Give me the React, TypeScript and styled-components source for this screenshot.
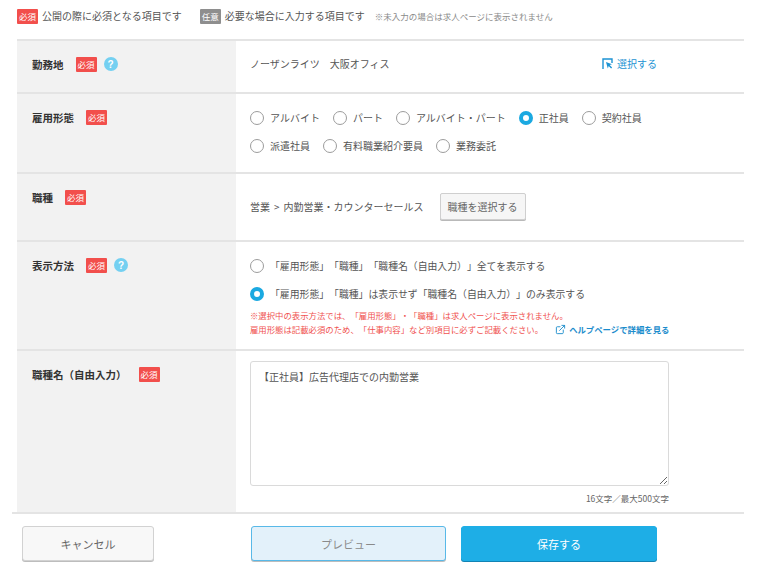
import React from 'react'
import styled, { createGlobalStyle } from 'styled-components'
import { ExternalLink } from 'lucide-react'

const GlobalStyle = createGlobalStyle`
    body {
        margin: 0;
        background: #fff;
        font-family: 'Noto Sans CJK JP', 'Noto Sans', sans-serif;
        color: #555;
        text-spacing-trim: space-all;
    }
`

const Page = styled.div`
    width: 760px;
    height: 570px;
    overflow: hidden;
    padding-top: 9px;
    box-sizing: border-box;
`

const Legend = styled.div`
    display: flex;
    align-items: center;
    height: 14px;
    margin: 0 0 16px 17px;
    font-size: 10px;
    line-height: 14px;
`

const LegendText = styled.span<{ $gapAfter?: number }>`
    margin-left: 4px;
    margin-right: ${p => p.$gapAfter ?? 0}px;
    white-space: nowrap;
`

const LegendNote = styled.span`
    font-size: 8.5px;
    color: #8a8a8a;
    white-space: nowrap;
`

const Badge = styled.span<{ $kind?: 'required' | 'optional' }>`
    display: inline-flex;
    align-items: center;
    justify-content: center;
    width: 21px;
    height: 15px;
    flex: none;
    border-radius: 1px;
    background: ${p => (p.$kind === 'optional' ? '#8e8e8e' : '#f24f4c')};
    color: #fff;
    font-size: 8.5px;
    font-weight: 400;
    line-height: 1;
`

const Table = styled.div`
    margin-left: 17px;
    width: 727px;
`

const Row = styled.div`
    display: grid;
    grid-template-columns: 219px 1fr;
    border-top: 2px solid #e4e4e4;
`

const LabelCell = styled.div`
    background: #f2f2f2;
    padding: 14px 15px;
`

const LabelInner = styled.div`
    display: flex;
    align-items: center;
    height: 18px;
    font-size: 10.5px;
    font-weight: 700;
    color: #333;
    white-space: nowrap;

    ${Badge} {
        margin-left: 12px;
    }
`

const HelpIcon = styled.span`
    display: inline-flex;
    align-items: center;
    justify-content: center;
    width: 14px;
    height: 14px;
    margin-left: 7px;
    border-radius: 50%;
    background: #74d0f1;
    color: #fff;
    font-size: 10px;
    font-weight: 700;
    font-family: 'Liberation Sans', sans-serif;
`

const ContentCell = styled.div<{ $pad: string }>`
    padding: ${p => p.$pad};
    font-size: 10px;
    line-height: 18px;
    color: #555;
`

const Between = styled.div`
    display: flex;
    align-items: center;
    justify-content: space-between;
    height: 18px;
`

const SelectLink = styled.a`
    display: flex;
    align-items: center;
    gap: 4px;
    color: #1d93d3;
    text-decoration: none;
`

const RadioRow = styled.div<{ $size?: number }>`
    display: flex;
    align-items: center;
    gap: 13px;
    height: 18px;
    font-size: ${p => p.$size ?? 10}px;

    & + & {
        margin-top: 10px;
    }
`

const RadioItem = styled.label`
    display: flex;
    align-items: center;
    gap: 6px;
    white-space: nowrap;
`

const RadioCircle = styled.span<{ $checked?: boolean }>`
    width: 14px;
    height: 14px;
    box-sizing: border-box;
    border-radius: 50%;
    background: #fff;
    border: ${p => (p.$checked ? '4.5px solid #1ba9e1' : '1px solid #9c9c9c')};
    flex: none;
`

const JobLine = styled.div`
    display: flex;
    align-items: center;
    gap: 16px;
`

const Crumb = styled.span`
    margin: 0 4px;
`

const GhostButton = styled.button`
    height: 27px;
    padding: 0 7px;
    border: 1px solid #cfcfcf;
    border-radius: 2px;
    background: #f6f6f6;
    box-shadow: 0 1px 0 #b9b9b9;
    font-family: inherit;
    font-size: 10px;
    color: #666;
`

const Notes = styled.div`
    margin-top: 5px;
    font-size: 8.4px;
    line-height: 14px;
    color: #f05250;
`

const NoteLine = styled.div`
    display: flex;
    align-items: center;
    white-space: nowrap;
`

const HelpLink = styled.a`
    display: inline-flex;
    align-items: center;
    gap: 3px;
    margin-left: 12px;
    color: #1a8ccc;
    font-weight: 700;
    text-decoration: none;
`

const FieldWrap = styled.div`
    width: 419px;
`

const TextArea = styled.textarea`
    display: block;
    width: 100%;
    height: 125px;
    box-sizing: border-box;
    padding: 7px 8px;
    border: 1px solid #dadada;
    border-radius: 3px;
    font-family: inherit;
    font-size: 10px;
    line-height: 16px;
    color: #555;
    resize: vertical;
    outline: none;
`

const Counter = styled.div`
    margin-top: 5px;
    text-align: right;
    font-size: 8.5px;
    line-height: 14px;
    color: #666;
`

const Footer = styled.div`
    display: flex;
    align-items: flex-start;
    margin-left: 12px;
    width: 732px;
    border-top: 2px solid #e4e4e4;
    padding: 12px 0 0 10px;
    box-sizing: border-box;
`

const FooterButton = styled.button<{ $variant: 'cancel' | 'preview' | 'save'; $width: number; $offset: number }>`
    width: ${p => p.$width}px;
    height: 35px;
    margin-left: ${p => p.$offset}px;
    border-radius: 3px;
    font-family: inherit;
    font-size: 11px;
    cursor: pointer;
    border: 1px solid
        ${p => (p.$variant === 'cancel' ? '#d2d2d2' : p.$variant === 'preview' ? '#58b9e8' : '#1eaee6')};
    background: ${p => (p.$variant === 'cancel' ? '#f8f8f8' : p.$variant === 'preview' ? '#e3f1fa' : '#1eaee6')};
    color: ${p => (p.$variant === 'save' ? '#fff' : p.$variant === 'preview' ? '#8a8a8a' : '#666')};
    box-shadow: 0 1px 0 ${p => (p.$variant === 'save' ? '#1283b4' : '#bdbdbd')};
`

const CursorBoxIcon = () => (
    <svg width="11" height="12" viewBox="0 0 11 12">
        <path d="M1 11V1h9v4" fill="none" stroke="#1d93d3" strokeWidth="1.4" />
        <path d="M4 4l6 2.2-2.3 0.9 2.4 2.4-1 1-2.4-2.4-0.9 2.3z" fill="#1d93d3" />
    </svg>
)

const Radio = ({ label, checked }: { label: string; checked?: boolean }) => (
    <RadioItem>
        <RadioCircle $checked={checked} />
        {label}
    </RadioItem>
)

const Label = ({ text, help }: { text: string; help?: boolean }) => (
    <LabelCell>
        <LabelInner>
            {text}
            <Badge>必須</Badge>
            {help && <HelpIcon>?</HelpIcon>}
        </LabelInner>
    </LabelCell>
)

const App = () => {
    return (
        <Page>
            <GlobalStyle />
            <Legend>
                <Badge>必須</Badge>
                <LegendText $gapAfter={18}>公開の際に必須となる項目です</LegendText>
                <Badge $kind="optional">任意</Badge>
                <LegendText $gapAfter={10}>必要な場合に入力する項目です</LegendText>
                <LegendNote>※未入力の場合は求人ページに表示されません</LegendNote>
            </Legend>

            <Table>
                <Row>
                    <Label text="勤務地" help />
                    <ContentCell $pad="14px 87px 19px 14px">
                        <Between>
                            <span>ノーザンライツ　大阪オフィス</span>
                            <SelectLink href="#">
                                <CursorBoxIcon />
                                選択する
                            </SelectLink>
                        </Between>
                    </ContentCell>
                </Row>

                <Row>
                    <Label text="雇用形態" />
                    <ContentCell $pad="15px 14px 17px">
                        <RadioRow>
                            <Radio label="アルバイト" />
                            <Radio label="パート" />
                            <Radio label="アルバイト・パート" />
                            <Radio label="正社員" checked />
                            <Radio label="契約社員" />
                        </RadioRow>
                        <RadioRow>
                            <Radio label="派遣社員" />
                            <Radio label="有料職業紹介要員" />
                            <Radio label="業務委託" />
                        </RadioRow>
                    </ContentCell>
                </Row>

                <Row>
                    <Label text="職種" />
                    <ContentCell $pad="19px 14px 20px">
                        <JobLine>
                            <span>
                                営業<Crumb>&gt;</Crumb>内勤営業・カウンターセールス
                            </span>
                            <GhostButton>職種を選択する</GhostButton>
                        </JobLine>
                    </ContentCell>
                </Row>

                <Row>
                    <Label text="表示方法" help />
                    <ContentCell $pad="15px 14px 13px">
                        <RadioRow $size={9.85}>
                            <Radio label="「雇用形態」「職種」「職種名（自由入力）」全てを表示する" />
                        </RadioRow>
                        <RadioRow $size={9.85}>
                            <Radio label="「雇用形態」「職種」は表示せず「職種名（自由入力）」のみ表示する" checked />
                        </RadioRow>
                        <Notes>
                            <NoteLine>※選択中の表示方法では、「雇用形態」・「職種」は求人ページに表示されません。</NoteLine>
                            <NoteLine>
                                雇用形態は記載必須のため、「仕事内容」など別項目に必ずご記載ください。
                                <HelpLink href="#">
                                    <ExternalLink size={11} strokeWidth={2} />
                                    ヘルプページで詳細を見る
                                </HelpLink>
                            </NoteLine>
                        </Notes>
                    </ContentCell>
                </Row>

                <Row>
                    <Label text="職種名（自由入力）" />
                    <ContentCell $pad="10px 14px 7px">
                        <FieldWrap>
                            <TextArea defaultValue="【正社員】広告代理店での内勤営業" />
                            <Counter>16文字／最大500文字</Counter>
                        </FieldWrap>
                    </ContentCell>
                </Row>
            </Table>

            <Footer>
                <FooterButton $variant="cancel" $width={132} $offset={0}>キャンセル</FooterButton>
                <FooterButton $variant="preview" $width={195} $offset={97}>プレビュー</FooterButton>
                <FooterButton $variant="save" $width={196} $offset={15}>保存する</FooterButton>
            </Footer>
        </Page>
    )
}

export default App
